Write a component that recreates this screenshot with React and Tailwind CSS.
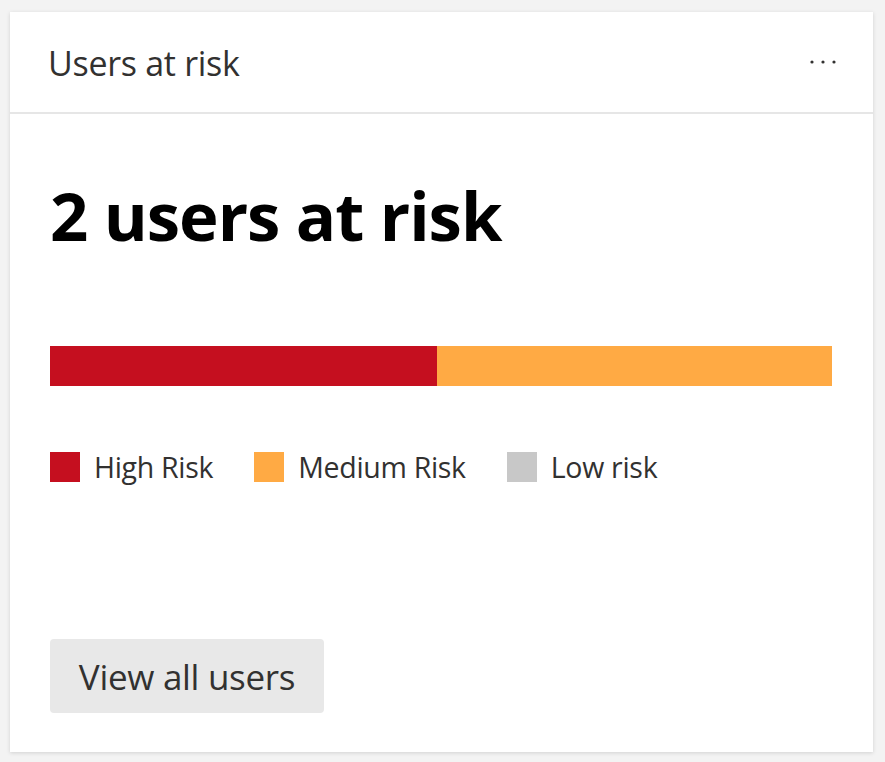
import React from 'react';

const legend = [
    { label: 'High Risk', color: 'bg-[#c50f1f]' },
    { label: 'Medium Risk', color: 'bg-[#ffaa44]' },
    { label: 'Low risk', color: 'bg-[#c8c8c8]' },
];

const App = () => {
    return (
        <div className="min-h-[762px] bg-[#f3f3f3] pt-[12px] pb-[10px] pl-[10px] pr-[12px] font-['Open_Sans',sans-serif] text-[#323130]">
            <div className="h-[740px] bg-white shadow-[0_1px_4px_rgba(0,0,0,0.14)] flex flex-col">
                {/* Header */}
                <div className="h-[102px] flex items-center justify-between pl-[38px] pr-[37px] border-b-2 border-[#e6e6e6]">
                    <h2 className="text-[34px] leading-none mt-[2px] tracking-[-0.3px]">Users at risk</h2>
                    <svg width="26" height="4" viewBox="0 0 26 4">
                        <circle cx="2" cy="2" r="1.6" fill="#323130" />
                        <circle cx="13" cy="2" r="1.6" fill="#323130" />
                        <circle cx="24" cy="2" r="1.6" fill="#323130" />
                    </svg>
                </div>

                {/* Body */}
                <div className="flex-1 flex flex-col px-[40px] pb-[39px]">
                    <h1 className="mt-[61px] text-[67px] font-bold leading-[80px] text-black tracking-[-1px]">2 users at risk</h1>

                    <div className="mt-[91px] h-[40px] flex w-[782px]">
                        <div className="w-[387px] bg-[#c50f1f]" />
                        <div className="flex-1 bg-[#ffaa44]" />
                    </div>

                    <div className="mt-[66px] flex items-center">
                        {legend.map((item) => (
                            <div key={item.label} className="flex items-center mr-[41px]">
                                <span className={`w-[30px] h-[30px] ${item.color}`} />
                                <span className="ml-[14px] text-[28.5px] leading-none tracking-[-0.3px]">{item.label}</span>
                            </div>
                        ))}
                    </div>

                    <div className="mt-auto">
                        <button className="h-[74px] w-[274px] rounded-[4px] bg-[#e8e8e8] text-[35px] text-[#323130] tracking-[-0.3px] pt-[2px]">
                            View all users
                        </button>
                    </div>
                </div>
            </div>
        </div>
    );
};

export default App;
